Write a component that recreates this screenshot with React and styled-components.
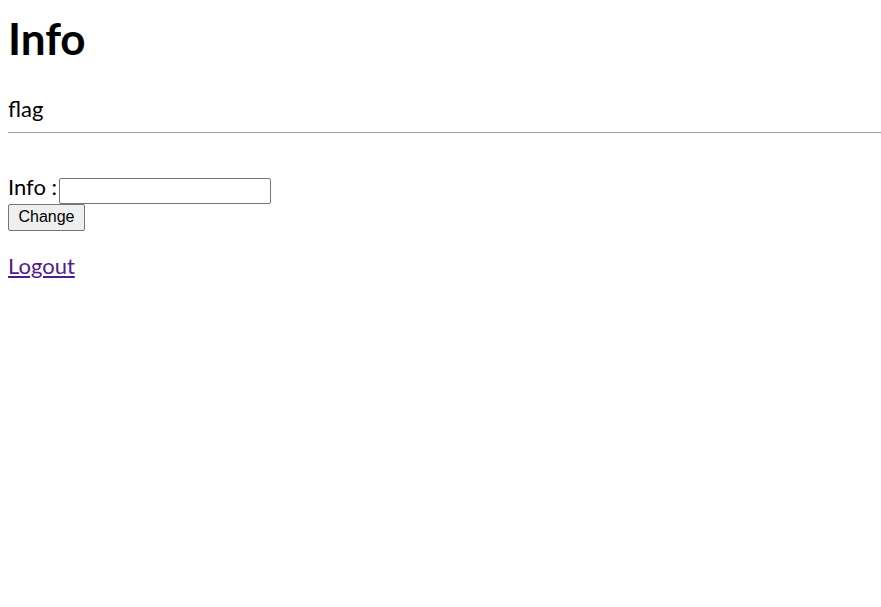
import React from 'react';
import styled, { createGlobalStyle } from 'styled-components';

const GlobalStyle = createGlobalStyle`
	body {
		margin: 8px 0 8px 8px;
		font-family: 'Lato', sans-serif;
		font-size: 22px;
		line-height: 1.2;
		background: #fff;
		color: #000;
	}
`;

const Title = styled.h1`
	font-size: 44px;
	line-height: 1.2;
	font-weight: 700;
	margin: 4px 0 0;
`;

const Flag = styled.p`
	margin: 31px 0 0;
`;

const Rule = styled.hr`
	border: none;
	border-top: 1px solid #9e9e9e;
	margin: 10px 0 0;
`;

const InfoForm = styled.form`
	margin-top: 41px;
`;

const Row = styled.div`
	display: flex;
	align-items: baseline;
	gap: 2px;
`;

const Field = styled.input`
	box-sizing: border-box;
	font-family: Arial, sans-serif;
	font-size: 13.33px;
	width: 212px;
	height: 26px;
	padding: 1px 2px;
	border: 1px solid #767676;
	border-radius: 2px;
`;

const Button = styled.button`
	display: block;
	box-sizing: border-box;
	font-family: Arial, sans-serif;
	font-size: 16px;
	width: 77px;
	height: 27px;
	padding: 0;
	color: #000;
	border: 1px solid #767676;
	border-radius: 2px;
	background: #efefef;
`;

const Footer = styled.p`
	margin: 22px 0 0;
`;

const LogoutLink = styled.a`
	color: #551a8b;
`;

export default function App() {
	return (
		<>
			<GlobalStyle />
			<Title>Info</Title>
			<Flag>flag</Flag>
			<Rule />
			<InfoForm>
				<Row>
					<label>Info :</label>
					<Field type="text" />
				</Row>
				<Button type="button">Change</Button>
			</InfoForm>
			<Footer>
				<LogoutLink href="#">Logout</LogoutLink>
			</Footer>
		</>
	);
}
